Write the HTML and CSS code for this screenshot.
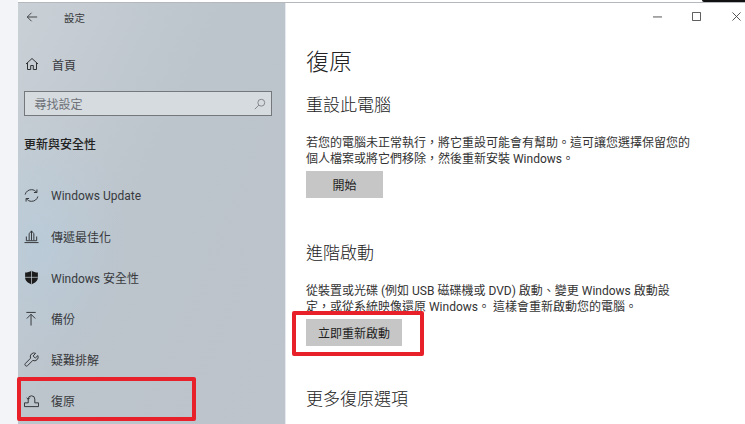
FILE: index.html
```html
<!DOCTYPE html>
<html lang="zh-TW">
<head>
<meta charset="utf-8">
<title>設定</title>
<link rel="stylesheet" href="styles.css">
</head>
<body>
<div class="topline"></div>
<div class="corner"></div>
<div class="window">
  <aside class="sidebar">
    <div class="titlebar">
      <svg class="ico back" viewBox="0 0 14 14"><path d="M13 7H1.500M6.500 2 1.500 7l5 5"/></svg>
      <span class="apptitle">設定</span>
    </div>
    <div class="home">
      <svg class="ico" viewBox="0 0 14 14"><path d="M1 7 7 1.500 13 7M2.500 6v6.500h3.200V8.500h2.600v4h3.200V6"/></svg>
      <span>首頁</span>
    </div>
    <div class="search">
      <span>尋找設定</span>
      <svg class="ico searchico" viewBox="0 0 14 14"><circle cx="8.500" cy="5.500" r="4"/><path d="M5.600 8.400 1 13"/></svg>
    </div>
    <div class="group">更新與安全性</div>
    <nav class="nav">
      <div class="item">
        <svg class="ico" viewBox="0 0 16 16"><path d="M1.200 7C2 3.800 4.700 1.800 8 1.800c2.200 0 4.100 1 5.300 2.600M14.800 9c-.8 3.200-3.500 5.200-6.800 5.200-2.200 0-4.100-1-5.300-2.600M13.800 1.500v3.300h-3.200M2.200 14.500v-3.300h3.200"/></svg>
        <span>Windows Update</span>
      </div>
      <div class="item">
        <svg class="ico" viewBox="0 0 16 16"><path d="M.5 14.500h15M2.500 8v4.500h11V8M5.500 12V5M8 12V2M10.500 12V5M5.500 5 8 2l2.500 3"/></svg>
        <span>傳遞最佳化</span>
      </div>
      <div class="item">
        <svg class="ico solid" viewBox="0 0 16 16"><path d="M8 .8c2 1.300 4.200 1.900 6.800 1.900V8c0 3.300-2.800 5.900-6.800 7.200C4 13.900 1.200 11.300 1.200 8V2.700C3.800 2.700 6 2.100 8 .8z"/><path class="cross" d="M8 .8v14.400M1.200 7.800h13.600"/></svg>
        <span>Windows 安全性</span>
      </div>
      <div class="item">
        <svg class="ico" viewBox="0 0 16 16"><path d="M2.500 1.500h10M7.500 15.500V3.500M3 8l4.500-4.500L12 8"/></svg>
        <span>備份</span>
      </div>
      <div class="item">
        <svg class="ico" viewBox="0 0 16 16"><path d="M14.800 3.800 12 6.500 9.700 4.200l2.700-2.800A4 4 0 0 0 7 6.600L1.500 12.200a1.600 1.600 0 0 0 2.300 2.300L9.400 9a4 4 0 0 0 5.400-5.200z"/></svg>
        <span>疑難排解</span>
      </div>
      <div class="item">
        <svg class="ico" viewBox="0 0 16 16"><path d="M.5 14.500h15V10.500h-4M4.500 10.500H.5v4M4.500 10.500V6.500a3.500 3.500 0 0 1 7 0v4M2.800 5l1.700 1.800L6.300 5"/></svg>
        <span>復原</span>
      </div>
    </nav>
  </aside>
  <main class="main">
    <div class="controls">
      <svg class="ctl" viewBox="0 0 10 10"><path d="M0 5.500h10"/></svg>
      <svg class="ctl" viewBox="0 0 10 10"><path d="M.5.500h9v9h-9z"/></svg>
      <svg class="ctl" viewBox="0 0 10 10"><path d="M.5.500l9 9M9.500.500l-9 9"/></svg>
    </div>
    <h1>復原</h1>
    <h2>重設此電腦</h2>
    <p>若您的電腦未正常執行，將它重設可能會有幫助。這可讓您選擇保留您的<br>個人檔案或將它們移除，然後重新安裝 Windows。</p>
    <button class="btn start">開始</button>
    <h2 class="advanced">進階啟動</h2>
    <p>從裝置或光碟 (例如 USB 磁碟機或 DVD) 啟動、變更 Windows 啟動設<br>定，或從系統映像還原 Windows。 這樣會重新啟動您的電腦。</p>
    <button class="btn restart">立即重新啟動</button>
    <h2 class="more">更多復原選項</h2>
  </main>
</div>
<div class="mark mark-nav"></div>
<div class="mark mark-btn"></div>
</body>
</html>
```
FILE: styles.css
```css
* { box-sizing: border-box; }
html, body { margin: 0; height: 100%; }
body {
  width: 745px;
  height: 424px;
  overflow: hidden;
  position: relative;
  background: #f2f4f8;
  font-family: Roboto, "Noto Sans CJK TC", sans-serif;
  color: #2b2b2b;
}
.topline { height: 3px; background: #fff; border-bottom: 1px solid #b5b9bd; margin-left: 18px; }
.corner { position: absolute; top: 0; right: 0; width: 43px; height: 2px; background: #111; border-bottom-left-radius: 3px; }
.window { display: flex; height: 421px; padding-left: 18px; }
.sidebar {
  width: 267px;
  flex: none;
  background:
    radial-gradient(ellipse 90px 130px at 20px 240px, rgba(180, 205, 222, .55), transparent),
    linear-gradient(115deg, #c9d0d6 0, #bcc4cc 45%, #bdc4cb 100%);
  font-size: 12px;
  color: #383a3d;
}
.ico { width: 14px; height: 14px; flex: none; fill: none; stroke: #2f3133; stroke-width: 1; }
.titlebar { display: flex; align-items: center; height: 28px; padding-left: 8px; }
.back { width: 12px; height: 12px; }
.apptitle { margin-left: 26px; font-size: 10.500px; }
.home { display: flex; align-items: center; gap: 13px; margin-top: 19px; height: 28px; padding-left: 7px; }
.search {
  display: flex;
  align-items: center;
  justify-content: space-between;
  margin: 13px 13px 0 6px;
  height: 25px;
  padding: 0 5px 0 9.500px;
  background: #d6dbe0;
  border: 1.500px solid #74787d;
  color: #6d7177;
}
.searchico { stroke: #777b80; width: 12px; height: 12px; }
.group { margin: 18px 0 0 6px; height: 22px; line-height: 22px; font-size: 12px; font-weight: 500; color: #222; }
.nav { margin-top: 19px; }
.item { display: flex; align-items: center; gap: 12px; height: 41px; padding-left: 6px; }
.item .ico { width: 15px; height: 15px; }
.solid path { fill: #1c1c1c; stroke: none; }
.solid .cross { fill: none; stroke: #bcc4cc; stroke-width: .8; }
.main { flex: 1; background: #fff; padding: 0 0 0 20px; position: relative; border-left: 1px solid #e6eaf0; }
.controls { display: flex; justify-content: flex-end; gap: 30.500px; padding: 9px 4.500px 0 0; height: 37px; }
.ctl { width: 9px; height: 9px; fill: none; stroke: #444; stroke-width: 1; }
h1 { margin: 7px 0 0; font-size: 23px; line-height: 32px; font-weight: 300; color: #222; }
h2 { margin: 14px 0 0; font-size: 17px; line-height: 24px; font-weight: 300; color: #222; }
p { margin: 18px 0 0; font-size: 12px; line-height: 16px; color: #333; white-space: nowrap; }
.btn {
  display: block;
  border: 0;
  background: #c6c6c6;
  font-family: inherit;
  font-size: 12px;
  color: #222;
  height: 27px;
  padding: 0;
}
.start { width: 77px; margin-top: 4px; }
.restart { width: 96px; margin-top: 4px; }
.advanced { margin-top: 43px; }
.more { margin-top: 41px; }
.mark { position: absolute; border: 4px solid #e8202a; border-radius: 2px; }
.mark-nav { left: 17px; top: 377px; width: 179px; height: 44px; }
.mark-btn { left: 292px; top: 311px; width: 132px; height: 45px; }
```
